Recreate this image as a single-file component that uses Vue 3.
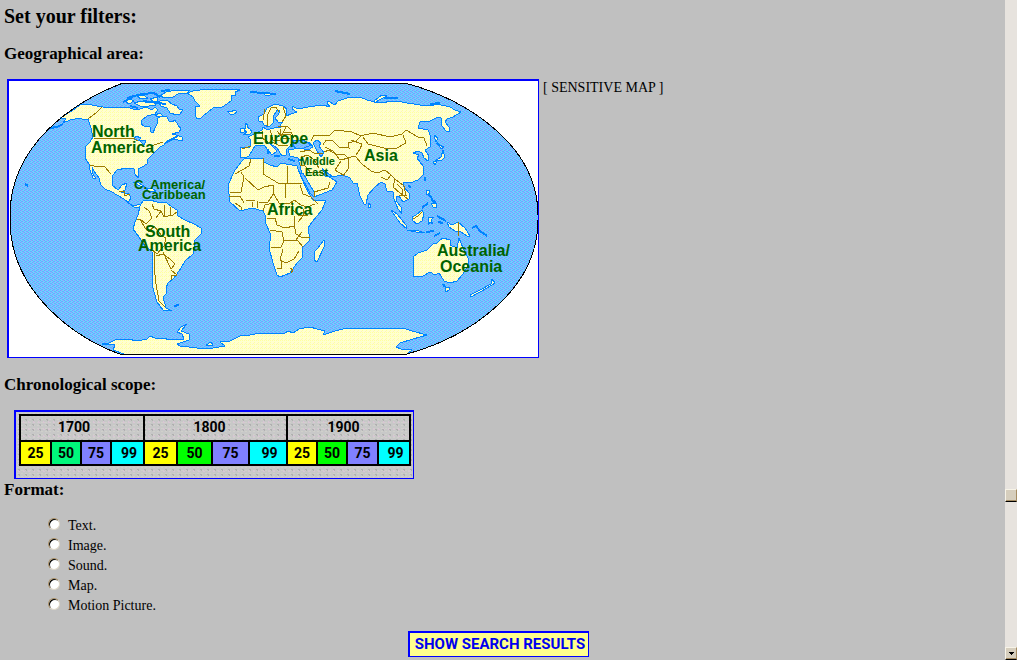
<script setup>
import { ref } from 'vue'

const format = ref('')
const formats = ['Text.', 'Image.', 'Sound.', 'Map.', 'Motion Picture.']
const centuries = ['1700', '1800', '1900']
const quarters = [
  { year: '25', tone: 'yellow' },
  { year: '50', tone: 'mint' },
  { year: '75', tone: 'violet' },
  { year: '99', tone: 'cyan' },
  { year: '25', tone: 'yellow' },
  { year: '50', tone: 'green' },
  { year: '75', tone: 'violet' },
  { year: '99', tone: 'cyan' },
  { year: '25', tone: 'yellow' },
  { year: '50', tone: 'green' },
  { year: '75', tone: 'violet' },
  { year: '99', tone: 'cyan' }
]
const widths = [31, 30, 30, 33, 33, 35, 37, 38, 30, 30, 31, 32]

const globe =
  'M123 83H405C465 99 538 144 538 215V220C538 293 465 338 407 354H120C78 340 10 293 10 220V215C10 144 75 101 123 83Z'

const land = [
  // North and Central America
  'M60 118L65 115L73 110L80 105L87 104L97 106L103 107L110 108L117 107L127 107L133 109L140 109L146 107L152 110L155 107L158 110L155 114L147 116L142 120L141 124L144 126L150 127L151 132L153 133L155 128L157 124L158 118L161 116L167 117L169 121L172 122L175 120L178 125L181 129L179 132L172 134L176 135L182 137L183 140L178 140L173 139L166 142L164 145L160 147L157 150L154 153L147 160L147 164L142 167L138 169L138 178L135 174L134 169L126 168L117 170L113 175L112 185L118 190L122 185L127 183L125 190L121 192L129 194L131 198L128 203L134 206L140 204L141 207L135 208L130 204L124 199L117 195L112 192L105 189L101 185L99 178L94 171L92 167L93 174L96 179L93 178L90 170L89 164L85 158L85 147L90 142L93 137L91 128L88 119L84 120L80 118L70 120L63 123L66 119Z',
  // Arctic islands
  'M158 102L162 100L168 101L172 104L177 106L179 109L183 110L180 114L177 115L170 113L167 108L161 106Z',
  'M160 96L166 92L176 90L190 90L187 93L178 94L173 97L165 98Z',
  'M134 103L141 101L149 103L154 101L156 105L149 106L140 106Z',
  'M125 101L130 99L134 101L129 104Z', 'M137 96L143 95L148 98L141 99Z', 'M150 99L157 97L158 101L153 101Z',
  'M155 115L160 113L163 116L158 117Z',
  // Greenland, Iceland, Svalbard
  'M187 93L193 91L200 90L208 89L225 90L233 89L240 90L235 92L236 95L231 96L232 100L227 104L222 107L213 108L208 112L203 116L201 118L197 119L195 115L195 107L200 106L195 101L193 97Z',
  'M227 111L230 112L235 110L237 112L234 114L230 114Z', 'M262 93L266 94L274 93L270 95L267 96Z',
  // British Isles
  'M245 123L248 125L247 127L250 129L252 132L250 134L243 135L247 132L244 130L246 127Z', 'M240 129L244 128L244 132L240 133Z',
  // Eurasia
  'M240 147L250 147L251 140L248 137L254 134L262 130L263 127L266 129L270 129L278 127L281 128L280 125L283 122L278 122L275 118L278 115L280 111L277 110L273 117L273 123L269 127L264 125L262 121L259 121L258 117L264 114L267 108L275 104L283 106L287 109L286 116L291 114L297 112L292 109L292 106L298 109L308 107L315 106L323 105L330 107L327 103L328 101L335 105L338 101L350 97L360 97L367 100L375 102L383 103L390 101L397 101L407 103L420 105L430 106L437 104L450 107L455 110L461 112L453 117L447 119L445 122L449 127L450 132L446 131L442 126L441 118L438 117L430 121L420 122L418 128L428 130L431 137L430 147L425 150L429 156L428 161L424 158L422 153L418 151L413 153L419 155L417 158L423 166L423 175L418 180L410 183L404 182L403 186L409 193L409 199L403 202L399 196L396 196L397 202L401 207L402 214L398 209L394 199L393 192L387 191L385 184L381 182L375 187L368 195L366 204L364 204L360 196L357 183L353 183L350 178L343 175L332 177L325 171L322 168L325 174L331 178L337 182L332 190L314 197L308 190L302 174L300 165L298 158L290 156L288 150L300 148L308 150L313 147L310 143L301 140L294 140L290 146L287 149L286 155L282 156L277 148L269 143L277 151L272 155L264 145L255 146L252 151L249 156L245 158L240 157Z',
  'M374 101L382 95L387 96L379 100L375 103Z',
  // Africa and Madagascar
  'M245 158L263 158L264 162L270 165L277 167L281 163L297 166L301 177L308 192L313 200L326 200L322 210L312 222L308 228L310 240L303 247L302 258L297 263L290 273L280 277L277 275L273 263L269 248L271 235L265 222L265 215L263 211L252 208L240 211L230 202L228 185L235 170L242 161Z',
  'M324 240L324 247L317 262L314 260L314 252L318 248Z',
  // South America
  'M140 206L143 201L150 200L157 202L167 203L172 207L177 210L178 216L185 220L194 224L201 228L201 234L195 240L193 254L185 261L181 268L174 278L168 283L166 288L167 293L163 297L165 304L166 308L172 311L163 310L157 302L153 288L152 251L145 246L139 237L133 229L135 222L138 215Z',
  // Australia, Tasmania and New Zealand
  'M413 277L414 268L413 257L418 253L427 250L433 244L437 243L440 240L443 238L450 240L450 245L457 248L459 238L463 248L468 258L469 264L463 274L457 281L450 283L444 281L441 276L439 273L435 275L430 272L423 276Z',
  'M445 288L450 287L449 290L446 292Z', 'M492 279L495 283L487 288L471 297L470 295L482 289L491 284Z',
  // Oceania islands
  'M447 222L452 225L458 222L465 228L470 236L467 236L461 232L455 231L449 227Z',
  'M412 217L416 215L422 210L424 214L422 221L417 224L413 221Z',
  'M391 210L397 214L406 225L407 229L400 223Z', 'M407 230L416 230L425 233L416 232Z',
  'M428 218L434 217L431 220L433 224L430 222L428 225Z',
  'M426 190L429 190L429 194L426 194Z', 'M431 203L436 203L437 207L433 207Z',
  'M434 135L438 138L436 142Z',
  'M439 145L444 147L441 149Z', 'M443 150L445 157L442 160L435 161L441 157Z', 'M433 162L437 161L435 165Z',
  'M368 203L371 205L370 208L368 207Z', 'M424 178L426 177L425 181Z',
  // Caribbean
  'M133 182L139 183L145 187L140 186Z', 'M146 188L153 189L156 191L148 191Z',
  // Antarctica
  'M102 344L109 343L115 340L128 339L137 341L147 339L150 336L155 338L163 338L170 340L175 339L184 339L182 334L177 332L181 327L187 324L181 331L189 334L189 340L177 344L180 346L197 348L213 348L225 346L220 342L230 341L240 336L250 335L260 333L285 333L288 331L293 333L299 329L310 327L317 329L325 331L323 335L335 331L347 328L370 328L383 329L403 328L412 331L427 335L413 339L400 343L396 347L401 349L412 350L407 354H124L113 350L115 345Z',
  'M206 345L211 342L213 345Z'
]

const lakes = [
  'M293 146L294 140L298 141L303 140L311 145L304 148L296 148Z',
  'M313 143L317 140L321 143L319 146L324 153L321 157L317 151Z',
  'M136 136L141 138L139 140L146 141L144 145L140 141L134 139Z',
  'M324 171L332 176L325 176Z',
  'M300 174L303 173L314 192L314 197L310 193Z'
]

const coastBits =
  'M50 128L57 127L63 124M25 184L28 186M127 98L142 94L155 93M123 102L133 97M161 91L170 90M143 101L166 104M130 106L138 108M384 98L398 98M430 104L440 103M437 143L440 146M408 186L411 187M428 194L432 198M422 208L428 203M431 200L436 202M431 197L434 203M437 216L446 221M426 232L434 231M434 236L440 233M472 228L476 226L480 231L487 236M443 284L445 287M174 306L179 305M250 92L276 94M335 91L350 94M268 149V154M274 156H280M288 159L295 161M299 160H303M438 222L443 223M165 143L178 136M154 93L160 97'

const borders = [
  'M102 107L97 112L88 119', 'M94 138H133L138 141M151 146L163 142', 'M90 165L98 167L104 166L111 174',
  'M119 191H124V196L130 194', 'M144 207L149 211L152 218L146 224L140 219L137 220', 'M152 204L154 209L161 211L164 217L173 215L177 212',
  'M164 205V216M170 207V215M161 211L156 218', 'M140 219L145 228L149 232L154 226L162 236L166 238L164 246L157 254L151 249',
  'M155 253L154 265L156 284L159 301L165 307', 'M156 256L163 254L170 259L175 264L171 269L163 252M171 270L177 275L171 276V280',
  'M265 109L263 120M267 126L267 116L271 108L276 107L279 112M283 107L286 116L282 122', 'M278 126L287 126L291 130M286 127L283 133L291 132L294 138M263 131L262 138L268 142M270 130L273 140L280 141M277 131L283 138L290 139M251 146L242 149M272 142L280 146L288 145M280 129V135L291 134',
  'M311 141L314 135L330 135L335 130L352 132L361 136L356 141L348 143L349 148L339 147L333 141L326 140L323 145',
  'M325 147L333 151L340 160L349 158M324 152L329 150L337 155L344 154L348 158L355 156L362 164L371 171L377 173L385 170L391 175L387 180L381 177M341 161L335 170L343 175M349 159L348 169L343 176M356 155L360 149L362 144L351 140',
  'M360 136L373 133L390 137L402 134L406 130L418 137L424 138L427 146M363 137L368 144L384 148L395 149L406 143L403 135M387 171L395 179L393 187L400 193L408 199M395 179L404 186L406 195L399 195M397 184L402 189V196',
  'M300 152L309 150L314 153H323M301 157L308 155L314 160L319 168M300 165L305 166L311 173L323 172M314 197L314 192L328 188L330 182',
  'M251 159L249 166L235 174M263 158L264 169L263 174L278 183L287 183L287 166M287 183H302M241 172L244 177L241 192L230 193M245 178L258 190L264 187L273 185L274 193L268 202L259 202M274 194L279 203L289 204L294 200L301 205L307 207L315 204',
  'M229 196L240 196L244 203M246 200L255 201M235 203L241 207V210M252 207L253 202M257 208V201M263 211L265 205L273 203M300 185L303 194L311 197L318 204M293 201L292 209L298 215L308 216M267 218H275L277 225L285 228L294 226L295 216',
  'M270 230L282 232L284 241L290 240L298 241L303 247M284 241L281 247L271 248M283 249L280 260L286 263L294 259L299 251M294 224L296 234L303 238L310 237M296 240L302 232M277 268H281V260M290 268L293 270L291 273',
  'M285 184V198M303 209V216L298 222M458 222V236M413 219L418 216L422 212'
]
</script>

<template>
  <div class="page">
    <main class="content">
      <h2>Set your filters:</h2>
      <h3>Geographical area:</h3>
      <div class="map-row">
        <a class="map" href="#area" aria-label="Sensitive map">
          <svg viewBox="9 81 529 276" shape-rendering="crispEdges">
            <defs>
              <pattern id="sea" width="4" height="4" patternUnits="userSpaceOnUse">
                <path fill="#73ceff" d="M0 0h4v4H0z" />
                <path fill="#63adff" d="M0 0h1v1H0zM2 1h1v1H2zM0 2h1v1H0zM2 3h1v1H2z" />
                <path fill="#9c9cff" d="M3 0h1v1H3zM1 2h1v1H1z" />
                <path fill="#63b5ff" d="M1 1h1v1H1zM3 3h1v1H3z" />
              </pattern>
              <pattern id="soil" width="4" height="4" patternUnits="userSpaceOnUse">
                <path fill="#ffffce" d="M0 0h4v4H0z" />
                <path fill="#ffffa0" d="M0 0h1v1H0zM2 2h1v1H2zM2 0h1v1H2z" />
                <path fill="#ffefc0" d="M1 3h1v1H1z" />
              </pattern>
            </defs>
            <path :d="globe" fill="url(#sea)" stroke="#000" />
            <g stroke="#0084ff" stroke-linejoin="round">
              <path v-for="d in land" :key="d" :d="d" fill="url(#soil)" />
              <path v-for="d in lakes" :key="d" :d="d" fill="url(#sea)" />
              <path :d="coastBits" fill="none" stroke-width="2" />
            </g>
            <g fill="none" stroke="#9c7b00">
              <path v-for="d in borders" :key="d" :d="d" />
            </g>
            <path :d="globe" fill="none" stroke="#000" />
            <g class="labels">
              <text x="92" y="137">North</text>
              <text x="91" y="153">America</text>
              <text x="253" y="144">Europe</text>
              <text x="364" y="161">Asia</text>
              <text x="267" y="215">Africa</text>
              <text x="145" y="237">South</text>
              <text x="138" y="251">America</text>
              <text x="437" y="256">Australia/</text>
              <text x="440" y="272">Oceania</text>
              <g class="medium">
                <text x="134" y="189">C. America/</text>
                <text x="142" y="199">Caribbean</text>
              </g>
              <g class="small">
                <text x="300" y="165">Middle</text>
                <text x="305" y="176">East</text>
              </g>
            </g>
          </svg>
        </a>
        <span>[ SENSITIVE MAP ]</span>
      </div>

      <h3>Chronological scope:</h3>
      <div class="scope">
        <table>
          <colgroup>
            <col v-for="(w, i) in widths" :key="i" :style="{ width: w + 'px' }" />
          </colgroup>
          <thead>
            <tr>
              <th v-for="c in centuries" :key="c" colspan="4" scope="colgroup">{{ c }}</th>
            </tr>
          </thead>
          <tbody>
            <tr>
              <td v-for="(q, i) in quarters" :key="i" :class="q.tone">{{ q.year }}</td>
            </tr>
          </tbody>
        </table>
      </div>

      <h3 id="format-title" class="format-title">Format:</h3>
      <div class="formats" role="radiogroup" aria-labelledby="format-title">
        <label v-for="f in formats" :key="f">
          <input v-model="format" type="radio" name="format" :value="f" />
          <span>{{ f }}</span>
        </label>
      </div>
      <button class="submit" type="button">SHOW SEARCH RESULTS</button>
    </main>

    <div class="scrollbar" aria-hidden="true">
      <span class="before"></span>
      <span class="knob"></span>
      <span class="after"></span>
      <span class="knob">
        <svg width="5" height="3" viewBox="0 0 5 3" shape-rendering="crispEdges"><path d="M0 0h5v1H4v1H3v1H2V2H1V1H0z" /></svg>
      </span>
    </div>
  </div>
</template>

<style>
body {
  background: #c0c0c0;
}
</style>

<style scoped>
.page {
  display: flex;
  min-height: 100vh;
  color: #000;
  font: 14px/20px "Liberation Serif", serif;
}
.content {
  flex: 1;
  display: flex;
  flex-direction: column;
  align-items: flex-start;
  box-sizing: border-box;
  padding: 4px 12px 3px 4px;
}
h2,
h3 {
  margin: 0;
}
h2 {
  margin-bottom: 16px;
  font-size: 20px;
  line-height: 24px;
}
h3 {
  margin-bottom: 15px;
  font-size: 17px;
  line-height: 20px;
}
.map-row {
  display: flex;
  gap: 4px;
  margin: 0 0 17px 3px;
}
.map-row > span {
  line-height: 17px;
}
.map,
.scope {
  border: solid #00f;
  border-width: 2px 1px 1px 2px;
}
.map {
  background: #fff;
}
.map svg {
  display: block;
  width: 529px;
  max-width: 100%;
}
.labels {
  fill: #006300;
  font: bold 16px "Liberation Sans", sans-serif;
}
.medium {
  font-size: 13px;
}
.small {
  font-size: 11px;
}
.scope {
  margin-left: 10px;
  padding: 2px 2px 12px 3px;
  background-color: #c8c8c8;
  background-image:
    radial-gradient(circle, #b0b0b0 1px, transparent 1px),
    radial-gradient(circle, #d9c6d4 1px, transparent 1px),
    radial-gradient(circle, #d0d0cb 1px, transparent 1px);
  background-size: 7px 5px, 5px 7px, 4px 3px;
}
table {
  width: 392px;
  table-layout: fixed;
  border-collapse: collapse;
  font: bold 14px/16px Roboto, sans-serif;
  text-align: center;
}
th,
td {
  border: 2px solid #000;
}
th {
  height: 22px;
  padding: 0 16px 2px 0;
}
th:nth-child(2) {
  padding-right: 12px;
}
th:last-child {
  padding-right: 10px;
}
td {
  height: 22px;
  padding: 0;
}
.yellow {
  background: #ff0;
}
.mint {
  background: #00f77b;
}
.violet {
  background: #8080ff;
}
.cyan {
  background: #0ff;
}
td.cyan {
  padding-left: 3px;
}
.green {
  background: #0f0;
}
.format-title {
  margin-top: 1px;
}
.formats {
  display: flex;
  flex-direction: column;
  margin-left: 44px;
}
.formats label {
  display: flex;
  align-items: center;
  gap: 8px;
}
.formats span {
  padding-top: 1px;
  line-height: 19px;
}
.formats input {
  appearance: none;
  box-sizing: border-box;
  width: 12px;
  height: 12px;
  margin: 0 0 2px;
  border: 1px solid;
  border-color: #a58c63 #ded6c6 #ded6c6 #a58c63;
  border-radius: 50%;
  background: #fff;
  box-shadow: inset 1px 1px #000;
}
.formats input:checked {
  background: radial-gradient(circle, #000 2px, #fff 2px);
}
.submit {
  align-self: center;
  margin-top: 16px;
  padding: 2px 3px 2px 5px;
  border: solid #00f;
  border-width: 2px 1px 1px 2px;
  background: #ffff8c;
  color: #00e;
  font: bold 15px/19px Roboto, sans-serif;
}
.scrollbar {
  display: flex;
  flex-direction: column;
  width: 12px;
  background: #e7e3de;
}
.before {
  flex: 490;
}
.after {
  flex: 145;
}
.knob {
  display: flex;
  align-items: center;
  justify-content: center;
  box-sizing: border-box;
  height: 13px;
  border: 1px solid #f7f3e7;
  border-right-color: #a58c63;
  border-bottom-color: #000;
  background: #d6cebd;
  box-shadow: inset 0 -1px #a58c63;
}
</style>
